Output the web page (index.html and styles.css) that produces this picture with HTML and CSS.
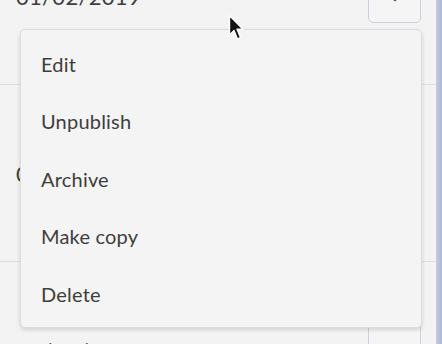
FILE: index.html
```html
<!DOCTYPE html>
<html lang="en">
<head>
    <meta charset="UTF-8">
    <title>Posts</title>
    <link rel="stylesheet" href="styles.css">
</head>
<body>
    <div class="page">
        <div class="list">
            <div class="row">
                <span class="date">01/02/2019</span>
                <button class="more">
                    <svg width="14" height="14" viewBox="0 0 14 14"><path d="M2 4l5 5 5-5" fill="none" stroke="#3e3e3c" stroke-width="2.4" stroke-linecap="round" stroke-linejoin="round"/></svg>
                </button>
            </div>
            <div class="row">
                <span class="date">01/05/2019</span>
                <button class="more">
                    <svg width="14" height="14" viewBox="0 0 14 14"><path d="M2 4l5 5 5-5" fill="none" stroke="#3e3e3c" stroke-width="2.4" stroke-linecap="round" stroke-linejoin="round"/></svg>
                </button>
            </div>
            <div class="row">
                <span class="date">01/08/2019</span>
                <button class="more">
                    <svg width="14" height="14" viewBox="0 0 14 14"><path d="M2 4l5 5 5-5" fill="none" stroke="#3e3e3c" stroke-width="2.4" stroke-linecap="round" stroke-linejoin="round"/></svg>
                </button>
            </div>
        </div>
        <div class="edge"></div>

        <ul class="menu">
            <li>Edit</li>
            <li>Unpublish</li>
            <li>Archive</li>
            <li>Make copy</li>
            <li>Delete</li>
        </ul>

        <svg class="cursor" width="16" height="28" viewBox="0 0 16 28">
            <path d="M1.5 1.5 L1.5 21 L6 16.5 L9.5 25 L12.5 23.6 L9 15.2 L15 15.2 Z" fill="#111" stroke="#fff" stroke-width="1.4" stroke-linejoin="round"/>
        </svg>
    </div>
</body>
</html>
```

FILE: styles.css
```css
*{
    margin: 0;
    padding: 0;
    box-sizing: border-box;
}
html,body{
    height: 100%;
    overflow: hidden;
}
body{
    background: #f3f3f3;
    font-family: Lato, "Liberation Sans", sans-serif;
    color: #3e3e3c;
}
.page{
    position: relative;
    display: flex;
    height: 100%;
}
.list{
    flex: 1;
    margin-top: -92px;
}
.row{
    display: flex;
    align-items: center;
    justify-content: space-between;
    height: 177px;
    padding: 0 15px 0 16px;
    border-bottom: 1px solid #dedede;
}
.date{
    font-size: 22px;
    letter-spacing: 0.3px;
}
.more{
    display: flex;
    align-items: flex-end;
    justify-content: center;
    width: 53px;
    height: 54px;
    padding-bottom: 17px;
    background: #f5f5f6;
    border: 1px solid #c9d0de;
    border-radius: 5px;
}
.edge{
    width: 6px;
    background: linear-gradient(to right, #c4cce0, #aab6d6);
}
.menu{
    position: absolute;
    left: 20px;
    top: 29px;
    width: 402px;
    height: 299px;
    padding: 5px 0;
    list-style: none;
    background: #f4f4f4;
    border: 1px solid #dcdcdc;
    border-radius: 5px;
    box-shadow: 0 2px 4px rgba(0,0,0,0.14);
}
.menu li{
    display: flex;
    align-items: center;
    height: 57.5px;
    padding-left: 20px;
    font-size: 20px;
    letter-spacing: 0.2px;
}
.cursor{
    position: absolute;
    left: 228px;
    top: 14px;
}
```
